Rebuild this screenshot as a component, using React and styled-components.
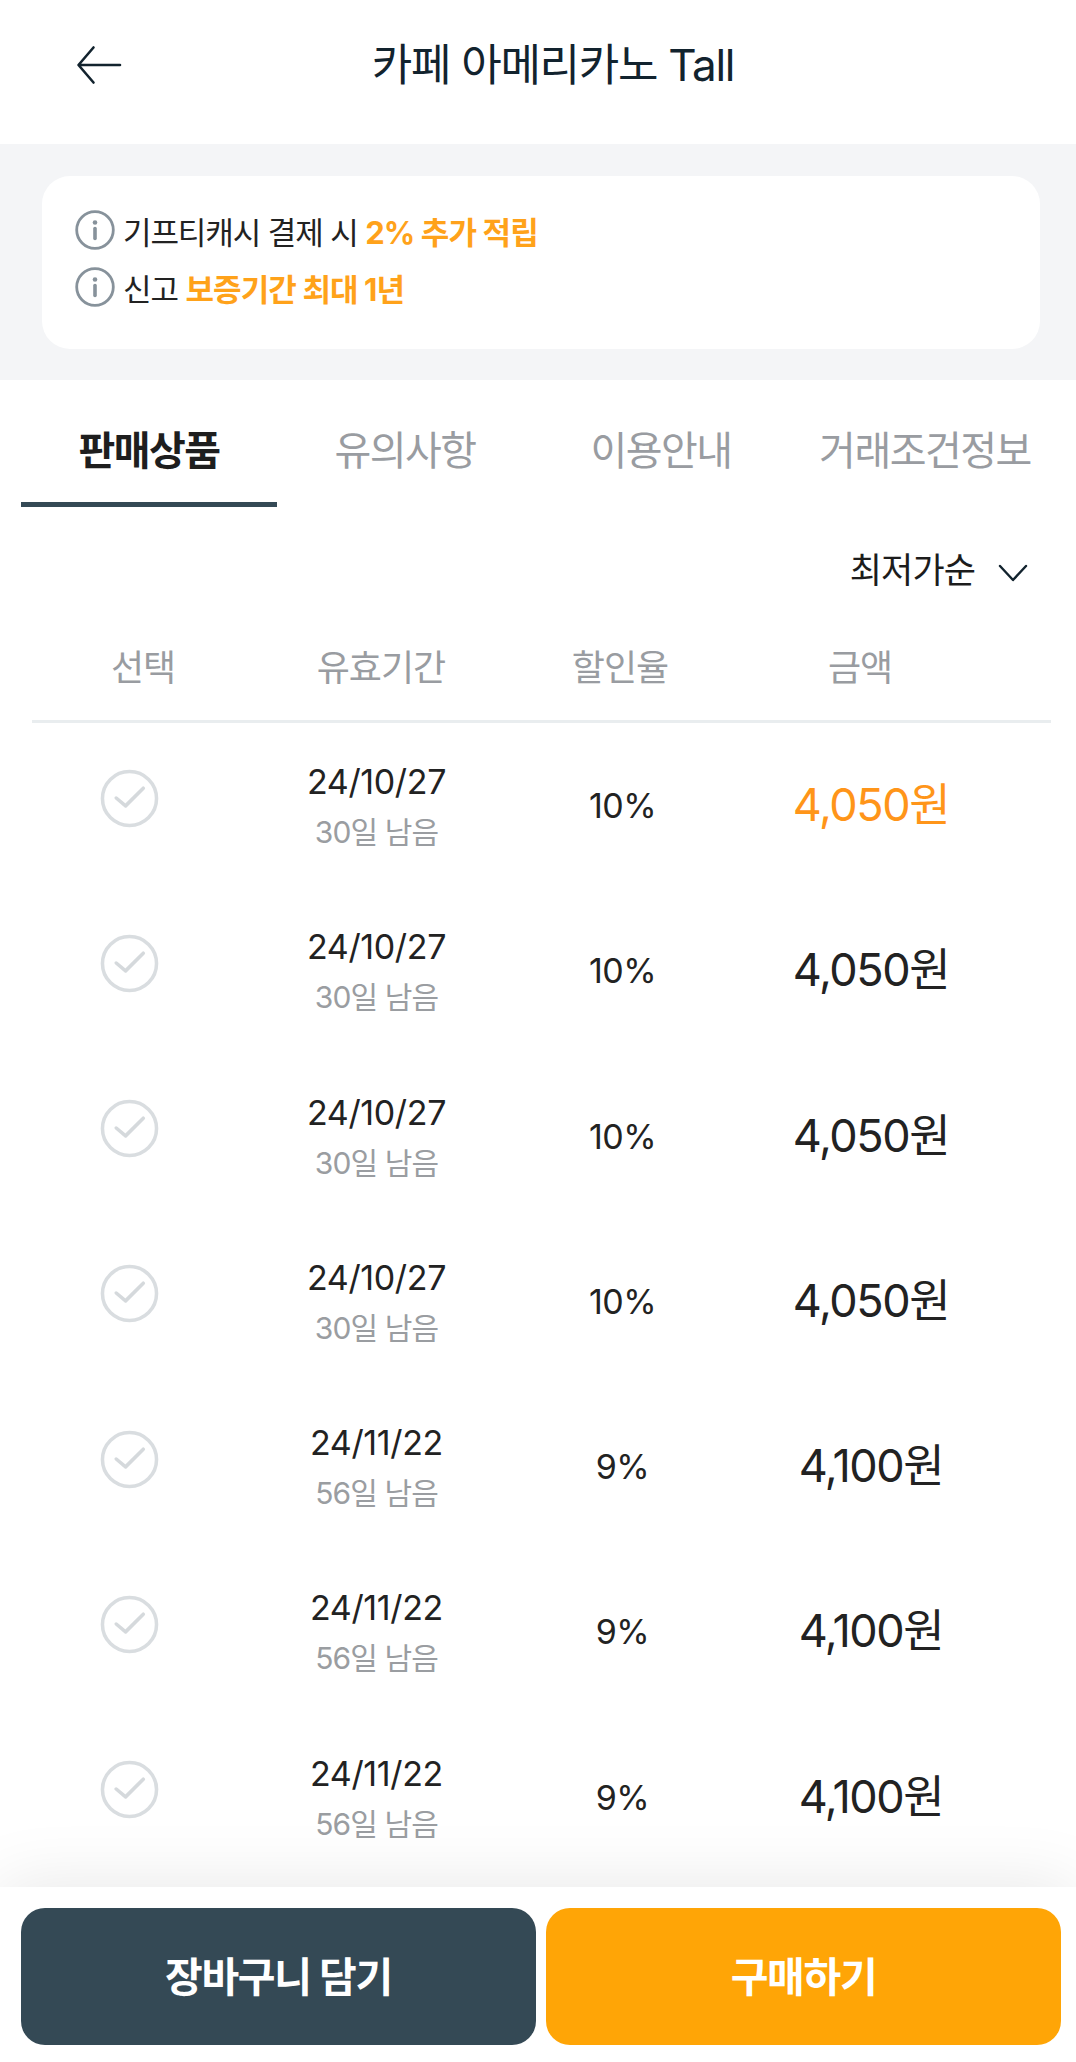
import React from "react";
import styled, { createGlobalStyle } from "styled-components";

const Global = createGlobalStyle`
  html, body { margin: 0; padding: 0; background: #fff; }
  body { font-family: Inter, "Noto Sans CJK KR", sans-serif; }
  * { box-sizing: border-box; }
`;
const Page = styled.div`
  position: relative; width: 1076px; height: 2062px; overflow: hidden; background: #fff;
`;
const Header = styled.header`
  height: 144px; display: flex; align-items: flex-start; padding: 40px 0 0 74px; position: relative;
`;
const BackButton = styled.svg`width: 50px; height: 50px; display: block;`;
const Title = styled.h1`
  position: absolute; left: 0; top: 37px; width: 1106px; margin: 0; text-align: center;
  font-size: 44px; line-height: 56px; font-weight: 400; letter-spacing: -1.3px; color: #12232e;
`;
const Notice = styled.section`
  height: 236px; background: #f4f5f7; padding: 32px 36px 31px 42px;
`;
const NoticeCard = styled.div`
  height: 173px; background: #fff; border-radius: 28px; padding: 34px 33px;
  display: flex; flex-direction: column; gap: 18px;
`;
const NoticeRow = styled.div`
  display: flex; align-items: center; gap: 8px; height: 39px;
  font-size: 31px; letter-spacing: -1.1px; color: #222;
`;
const NoticeText = styled.span`padding-top: 2px;`;
const Strong = styled.b`color: #ffa21a; font-weight: 700; letter-spacing: -0.9px;`;
const Tabs = styled.nav`
  display: grid; grid-template-columns: 256px 256px 256px 272px; padding: 0 0 0 21px; height: 127px;
`;
const Tab = styled.div`
  height: 127px; display: flex; align-items: center; justify-content: center; padding-top: 26px; padding-bottom: 12px; white-space: nowrap;
  font-size: 40px; letter-spacing: -1.5px;
  font-weight: ${p => (p.$active ? 700 : 400)};
  color: ${p => (p.$active ? "#1e1e1e" : "#999ca1")};
  border-bottom: ${p => (p.$active ? "5px solid #344955" : "5px solid transparent")};
`;
const Sort = styled.div`
  display: flex; justify-content: flex-end; align-items: center; gap: 22px; padding: 0 47px 8px 0; height: 64px;
  margin-top: 32px; font-size: 35px; letter-spacing: -0.9px; color: #1c1c1c;
`;
const Chevron = styled.svg`width: 32px; height: 20px; display: block; margin-top: 12px;`;
const Columns = styled.div`
  display: grid; grid-template-columns: 222px 254px 224px 256px; margin: 0 25px 0 32px; height: 120px;
  padding-top: 22px; align-items: center; border-bottom: 3px solid #e9edef;
`;
const ColHead = styled.div`
  text-align: center; font-size: 36px; letter-spacing: -1px; color: #999ca1; padding-bottom: 16px;
`;
const Rows = styled.div`display: flex; flex-direction: column;`;
const Row = styled.div`
  height: 165.3px; display: grid; grid-template-columns: 170px 349px 143px 354px; margin: 0 25px 0 32px; padding-top: 38px;
`;
const CheckCell = styled.div`display: flex; justify-content: flex-start; padding-left: 68px; padding-top: 7.5px;`;
const CheckIcon = styled.svg`width: 59px; height: 59px; display: block;`;
const DateCell = styled.div`display: flex; flex-direction: column; align-items: center;`;
const DateText = styled.div`font-size: 34px; line-height: 42px; letter-spacing: -0.35px; color: #222;`;
const Remain = styled.div`font-size: 30px; line-height: 40px; margin-top: 9px; letter-spacing: -0.9px; color: #9a9da1;`;
const Rate = styled.div`
  text-align: center; font-size: 34px; line-height: 42px; margin-top: 24px; letter-spacing: -0.6px; color: #222;
`;
const Price = styled.div`
  text-align: center; font-size: 45px; line-height: 56px; margin-top: 16px; letter-spacing: -1.4px;
  color: ${p => (p.$hot ? "#ff9519" : "#222")};
`;
const Bottom = styled.div`
  position: absolute; left: 0; right: 0; bottom: 0; height: 175px; background: #fff;
  display: grid; grid-template-columns: 515px 515px; gap: 10px; padding: 21px 15px 17px 21px;
  box-shadow: 0 0 70px rgba(0, 0, 0, 0.1);
`;
const Button = styled.button`
  border: 0; border-radius: 24px; font-family: inherit; font-size: 41px; font-weight: 700; letter-spacing: -1.3px;
  padding: 0 0 6px; color: #fff; background: ${p => (p.$primary ? "#ffa506" : "#344955")};
`;

const Info = () => (
  <svg width="40" height="40" viewBox="0 0 40 40" fill="none" aria-hidden="true">
    <circle cx="20" cy="20" r="18.3" stroke="#87929b" strokeWidth="2.8" />
    <circle cx="20" cy="12.5" r="2.3" fill="#87929b" />
    <path d="M20 18.5v10" stroke="#87929b" strokeWidth="3.6" strokeLinecap="round" />
  </svg>
);
const rows = [
  ["24/10/27", "30일 남음", "10%", "4,050원", true],
  ["24/10/27", "30일 남음", "10%", "4,050원"],
  ["24/10/27", "30일 남음", "10%", "4,050원"],
  ["24/10/27", "30일 남음", "10%", "4,050원"],
  ["24/11/22", "56일 남음", "9%", "4,100원"],
  ["24/11/22", "56일 남음", "9%", "4,100원"],
  ["24/11/22", "56일 남음", "9%", "4,100원"],
];

export default function App() {
  return (
    <Page>
      <Global />
      <Header>
        <BackButton viewBox="0 0 50 50" fill="none">
          <path d="M46 25H5M19.5 7.5 4.5 25l15 17.5" stroke="#12232e" strokeWidth="2.6" strokeLinecap="round" strokeLinejoin="round" />
        </BackButton>
        <Title>카페 아메리카노 Tall</Title>
      </Header>
      <Notice>
        <NoticeCard>
          <NoticeRow><Info /><NoticeText>기프티캐시 결제 시 <Strong>2% 추가 적립</Strong></NoticeText></NoticeRow>
          <NoticeRow><Info /><NoticeText>신고 <Strong>보증기간 최대 1년</Strong></NoticeText></NoticeRow>
        </NoticeCard>
      </Notice>
      <Tabs>
        <Tab $active>판매상품</Tab>
        <Tab>유의사항</Tab>
        <Tab>이용안내</Tab>
        <Tab>거래조건정보</Tab>
      </Tabs>
      <Sort>
        최저가순
        <Chevron viewBox="0 0 32 20" fill="none">
          <path d="M3 3l13 14L29 3" stroke="#12232e" strokeWidth="2.4" strokeLinecap="round" strokeLinejoin="round" />
        </Chevron>
      </Sort>
      <Columns>
        <ColHead>선택</ColHead>
        <ColHead>유효기간</ColHead>
        <ColHead>할인율</ColHead>
        <ColHead>금액</ColHead>
      </Columns>
      <Rows>
        {rows.map((r, i) => (
          <Row key={i}>
            <CheckCell>
              <CheckIcon viewBox="0 0 60 60" fill="none">
                <circle cx="30" cy="30" r="27.5" stroke="#d9dde0" strokeWidth="3.6" />
                <path d="M16.5 29.5 26 37.5 44 19.5" stroke="#d5d9dc" strokeWidth="3.6" strokeLinecap="round" strokeLinejoin="round" />
              </CheckIcon>
            </CheckCell>
            <DateCell>
              <DateText>{r[0]}</DateText>
              <Remain>{r[1]}</Remain>
            </DateCell>
            <Rate>{r[2]}</Rate>
            <Price $hot={r[4]}>{r[3]}</Price>
          </Row>
        ))}
      </Rows>
      <Bottom>
        <Button>장바구니 담기</Button>
        <Button $primary>구매하기</Button>
      </Bottom>
    </Page>
  );
}
